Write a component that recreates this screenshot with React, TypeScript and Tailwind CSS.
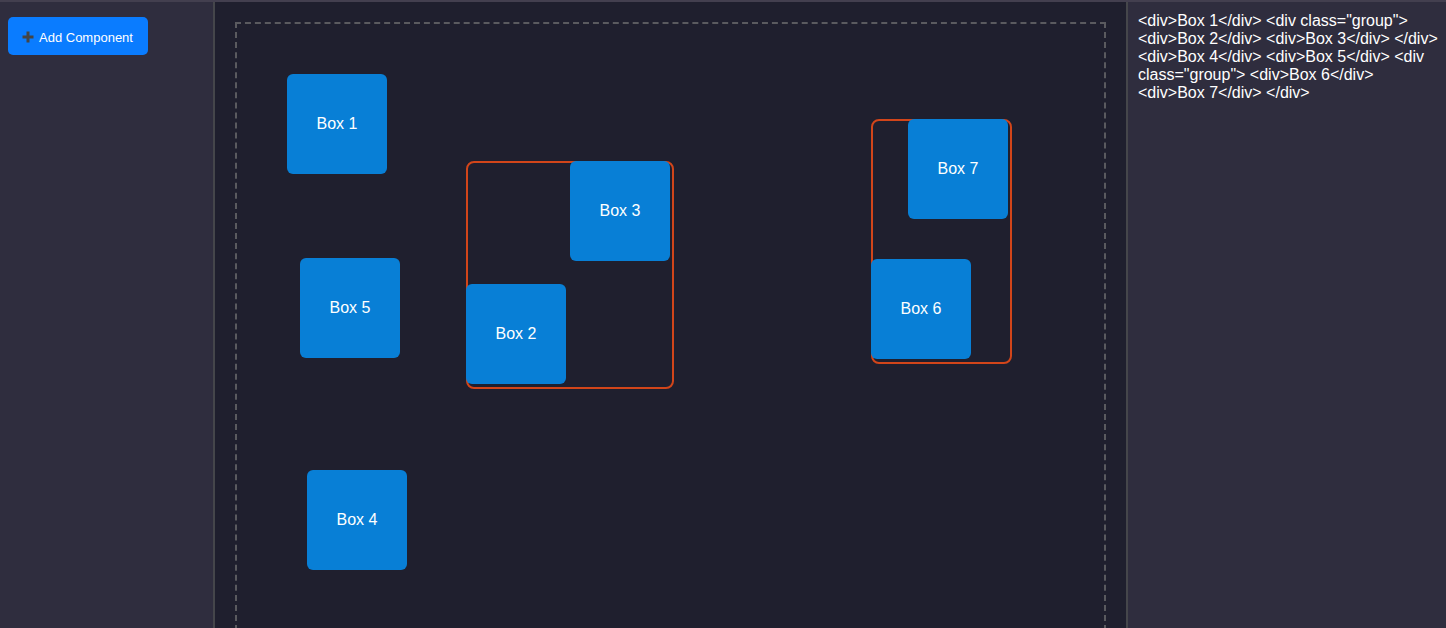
import React from "react";

type Box = { id: number; x: number; y: number };

const font = { fontFamily: '"Liberation Sans", Arial, sans-serif' };

function CanvasBox({ box }: { box: Box }) {
  return (
    <div
      className="absolute flex h-[100px] w-[100px] items-center justify-center rounded-[6px] bg-[#087fd6] text-[16px] text-white"
      style={{ left: box.x, top: box.y }}
    >
      Box {box.id}
    </div>
  );
}

function Group({
  x,
  y,
  w,
  h,
  boxes,
}: {
  x: number;
  y: number;
  w: number;
  h: number;
  boxes: Box[];
}) {
  return (
    <div
      className="absolute rounded-[8px] border-2 border-[#d2451a]"
      style={{ left: x, top: y, width: w, height: h }}
    >
      {boxes.map((b) => (
        <CanvasBox key={b.id} box={b} />
      ))}
    </div>
  );
}

export default function App() {
  return (
    <div
      className="flex h-[628px] w-full overflow-hidden border-t-2 border-[#433f4f] bg-[#1f1f2e]"
      style={font}
    >
      <aside className="w-[215px] shrink-0 border-r-2 border-[#45464b] bg-[#2f2d3e] px-[8px] pt-[15px]">
        <button className="flex h-[38px] w-[140px] items-center gap-[5px] rounded-[5px] bg-[#0a7cff] pl-[14px] pt-[2px] text-[13px] leading-none text-white">
          <svg width="12" height="12" viewBox="0 0 12 12">
            <path d="M6 0.5v11M0.5 6h11" stroke="#444" strokeWidth="3" />
          </svg>
          Add Component
        </button>
      </aside>

      <main className="flex-1 p-[20px]">
        <div className="relative h-[800px] border-2 border-dashed border-[#5a5a5f]">
          <CanvasBox box={{ id: 1, x: 50, y: 50 }} />
          <CanvasBox box={{ id: 5, x: 63, y: 234 }} />
          <CanvasBox box={{ id: 4, x: 70, y: 446 }} />
          <Group
            x={229}
            y={137}
            w={208}
            h={228}
            boxes={[
              { id: 3, x: 102, y: -2 },
              { id: 2, x: -2, y: 121 },
            ]}
          />
          <Group
            x={634}
            y={95}
            w={141}
            h={245}
            boxes={[
              { id: 7, x: 35, y: -2 },
              { id: 6, x: -2, y: 138 },
            ]}
          />
        </div>
      </main>

      <section className="w-[320px] shrink-0 border-l-2 border-[#45464b] bg-[#2f2d3e] pl-[10px] pr-[4px] pt-[10px] text-[16px] leading-[18px] text-white">
        {
          '<div>Box 1</div> <div class="group"> <div>Box 2</div> <div>Box 3</div> </div> <div>Box 4</div> <div>Box 5</div> <div class="group"> <div>Box 6</div> <div>Box 7</div> </div>'
        }
      </section>
    </div>
  );
}
